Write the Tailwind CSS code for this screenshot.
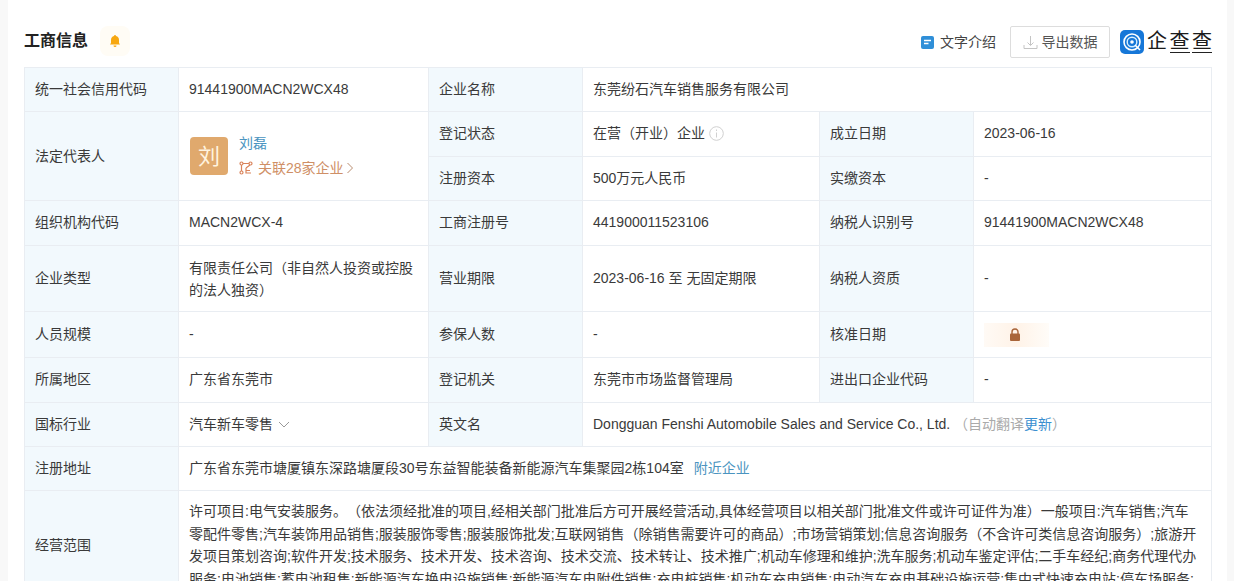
<!DOCTYPE html>
<html lang="zh">
<head>
    <meta charset="UTF-8">
    <script src="https://cdn.jsdelivr.net/npm/@tailwindcss/browser@4"></script>
    <title>工商信息</title>
</head>
<body class="h-[581px] overflow-hidden bg-[#f8f8f8] font-['Liberation_Sans','Noto_Sans_CJK_SC',sans-serif] text-[14px] text-[#3a3a3a]">
    <div class="h-[581px] ml-[8px] mr-[7px] pl-[16px] bg-white overflow-hidden">
        <!-- header -->
        <div class="h-[67px] w-[1188px] flex items-center justify-between pt-[17px] pr-[0px]">
            <div class="flex items-center -mt-[3px]">
                <h2 class="text-[16px] font-bold text-[#222]">工商信息</h2>
                <span class="ml-[12px] w-[30px] h-[30px] rounded-[8px] flex items-center justify-center bg-[#fffcf5]">
                    <svg width="14" height="14" viewBox="0 0 14 14"><path d="M7 1a1 1 0 0 1 1 1c2 .5 3 2 3 4v3l1 1.500H2L3 9V6c0-2 1-3.500 3-4a1 1 0 0 1 1-1z" fill="#f7a70f"/><path d="M5.500 11.500h3a1.500 1.500 0 0 1-3 0z" fill="#f7a70f"/></svg>
                </span>
            </div>
            <div class="flex items-center">
                <a class="flex items-center text-[#444]">
                    <svg width="13" height="13" viewBox="0 0 13 13"><rect width="13" height="13" rx="2" fill="#2f8fd8"/><path d="M3 4.500h7M3 7.500h4.500" stroke="#fff" stroke-width="1.500"/></svg>
                    <span class="ml-[6px]">文字介绍</span>
                </a>
                <button class="ml-[14px] w-[100px] h-[32px] flex items-center justify-center border border-[#ddd] rounded-[2px] text-[#555]">
                    <svg width="15" height="15" viewBox="0 0 15 15" fill="none" stroke="#c4c4c4"><path d="M7.500 1v9M4.500 7.500l3 3 3-3M1 10v3.500h13V10"/></svg>
                    <span class="ml-[4px]">导出数据</span>
                </button>
                <div class="ml-[10px] flex items-center">
                    <svg width="24" height="24" viewBox="0 0 24 24" fill="none"><rect width="24" height="24" rx="5" fill="#1677d8"/><circle cx="12" cy="12" r="8" stroke="#fff" stroke-width="1.600"/><circle cx="12" cy="12" r="4.800" stroke="#d8f0ff" stroke-width="1.400"/><circle cx="12" cy="12" r="1.800" fill="#fff"/><path d="M15 15l5 5" stroke="#fff" stroke-width="1.600"/></svg>
                    <div class="ml-[3px] w-[65px] flex justify-between text-[20px] leading-[21px] text-[#1c1c1c]">
                        <span>企</span>
                        <span class="border-b border-[#222]">查</span>
                        <span class="border-b border-[#222]">查</span>
                    </div>
                </div>
            </div>
        </div>

        <!-- info table -->
        <table class="w-[1187px] table-fixed border-collapse border border-[#e9edf2] [&_td]:border [&_td]:border-[#e9edf2] [&_td]:px-[10px]">
            <colgroup>
                <col class="w-[154px]"><col class="w-[250px]"><col class="w-[154px]"><col class="w-[237px]"><col class="w-[154px]"><col class="w-[238px]">
            </colgroup>
            <tbody>
                <tr class="h-[44px]">
                    <td class="bg-[#f2f9fd]">统一社会信用代码</td>
                    <td>91441900MACN2WCX48</td>
                    <td class="bg-[#f2f9fd]">企业名称</td>
                    <td colspan="3">东莞纷石汽车销售服务有限公司</td>
                </tr>
                <tr class="h-[45px] [&>td]:pb-[2px]">
                    <td rowspan="2" class="bg-[#f2f9fd] pb-0!">法定代表人</td>
                    <td rowspan="2" class="pb-0!">
                        <div class="flex items-center ml-[1px]">
                            <div class="w-[38px] h-[38px] rounded-[4px] bg-[#e0a96d] text-[#fff3df] text-[22px] flex items-center justify-center">刘</div>
                            <div class="ml-[11px] mb-[2px]">
                                <a class="block leading-[20px] text-[#4a94c0]">刘磊</a>
                                <a class="mt-[5px] flex items-center leading-[20px] text-[#cf8f66]">
                                    <svg width="14" height="14" viewBox="0 0 14 14" fill="none" stroke="#d9835a" stroke-width="1.200"><circle cx="2.500" cy="2.500" r="1.500"/><circle cx="11.500" cy="2.500" r="1.500"/><circle cx="2.500" cy="11.500" r="1.500"/><path d="M4 2.500h6M2.500 4v6M7 7l4-3M7 7v5h5M7 9.500h4"/></svg>
                                    <span class="ml-[5px]">关联28家企业</span>
                                    <svg class="ml-[2px]" width="8" height="12" viewBox="0 0 8 12" fill="none" stroke="#b98d70"><path d="M1.500 1l5 5-5 5"/></svg>
                                </a>
                            </div>
                        </div>
                    </td>
                    <td class="bg-[#f2f9fd]">登记状态</td>
                    <td>
                        <span class="flex items-center">在营（开业）企业
                            <svg class="ml-[4px]" width="15" height="15" viewBox="0 0 15 15" fill="none" stroke="#d0d0d0"><circle cx="7.500" cy="7.500" r="6.800"/><path d="M7.500 6.500v5M7.500 3.500v1.500"/></svg>
                        </span>
                    </td>
                    <td class="bg-[#f2f9fd]">成立日期</td>
                    <td>2023-06-16</td>
                </tr>
                <tr class="h-[44px]">
                    <td class="bg-[#f2f9fd]">注册资本</td>
                    <td>500万元人民币</td>
                    <td class="bg-[#f2f9fd]">实缴资本</td>
                    <td>-</td>
                </tr>
                <tr class="h-[45px] [&>td]:pb-[2px]">
                    <td class="bg-[#f2f9fd]">组织机构代码</td>
                    <td>MACN2WCX-4</td>
                    <td class="bg-[#f2f9fd]">工商注册号</td>
                    <td>441900011523106</td>
                    <td class="bg-[#f2f9fd]">纳税人识别号</td>
                    <td>91441900MACN2WCX48</td>
                </tr>
                <tr class="h-[66px]">
                    <td class="bg-[#f2f9fd]">企业类型</td>
                    <td class="leading-[22px]">有限责任公司（非自然人投资或控股的法人独资）</td>
                    <td class="bg-[#f2f9fd]">营业期限</td>
                    <td>2023-06-16 至 无固定期限</td>
                    <td class="bg-[#f2f9fd]">纳税人资质</td>
                    <td>-</td>
                </tr>
                <tr class="h-[46px]">
                    <td class="bg-[#f2f9fd]">人员规模</td>
                    <td>-</td>
                    <td class="bg-[#f2f9fd]">参保人数</td>
                    <td>-</td>
                    <td class="bg-[#f2f9fd]">核准日期</td>
                    <td>
                        <div class="w-[65px] h-[24px] flex items-center justify-center bg-gradient-to-r from-[#fffaf5] via-[#fff3e8] to-[#fffcf8]">
                            <svg class="mr-[4px]" width="12" height="13" viewBox="0 0 12 13"><path d="M3 6V4a3 3 0 0 1 6 0v2" fill="none" stroke="#a9653a" stroke-width="1.400"/><rect x="1" y="5.500" width="10" height="7.500" rx="1" fill="#a9653a"/></svg>
                        </div>
                    </td>
                </tr>
                <tr class="h-[45px] [&>td]:pb-[2px]">
                    <td class="bg-[#f2f9fd]">所属地区</td>
                    <td>广东省东莞市</td>
                    <td class="bg-[#f2f9fd]">登记机关</td>
                    <td>东莞市市场监督管理局</td>
                    <td class="bg-[#f2f9fd]">进出口企业代码</td>
                    <td>-</td>
                </tr>
                <tr class="h-[44px]">
                    <td class="bg-[#f2f9fd]">国标行业</td>
                    <td>
                        <span class="flex items-center">汽车新车零售
                            <svg class="ml-[5px]" width="12" height="8" viewBox="0 0 12 8" fill="none" stroke="#999"><path d="M1 1l5 5 5-5"/></svg>
                        </span>
                    </td>
                    <td class="bg-[#f2f9fd]">英文名</td>
                    <td colspan="3">Dongguan Fenshi Automobile Sales and Service Co., Ltd. <span class="text-[#aaa]">（自动翻译<a class="text-[#3a8fd0]">更新</a>）</span></td>
                </tr>
                <tr class="h-[44px]">
                    <td class="bg-[#f2f9fd]">注册地址</td>
                    <td colspan="5">广东省东莞市塘厦镇东深路塘厦段30号东益智能装备新能源汽车集聚园2栋104室<a class="ml-[10px] text-[#4a94c0]">附近企业</a></td>
                </tr>
                <tr>
                    <td class="bg-[#f2f9fd]">经营范围</td>
                    <td colspan="5" class="pt-[9px] pb-[9px] leading-[22.500px] [text-spacing-trim:space-all]">许可项目:电气安装服务。（依法须经批准的项目,经相关部门批准后方可开展经营活动,具体经营项目以相关部门批准文件或许可证件为准）一般项目:汽车销售;汽车零配件零售;汽车装饰用品销售;服装服饰零售;服装服饰批发;互联网销售（除销售需要许可的商品）;市场营销策划;信息咨询服务（不含许可类信息咨询服务）;旅游开发项目策划咨询;软件开发;技术服务、技术开发、技术咨询、技术交流、技术转让、技术推广;机动车修理和维护;洗车服务;机动车鉴定评估;二手车经纪;商务代理代办服务;电池销售;蓄电池租售;新能源汽车换电设施销售;新能源汽车电附件销售;充电桩销售;机动车充电销售;电动汽车充电基础设施运营;集中式快速充电站;停车场服务;</td>
                </tr>
            </tbody>
        </table>
    </div>
</body>
</html>
